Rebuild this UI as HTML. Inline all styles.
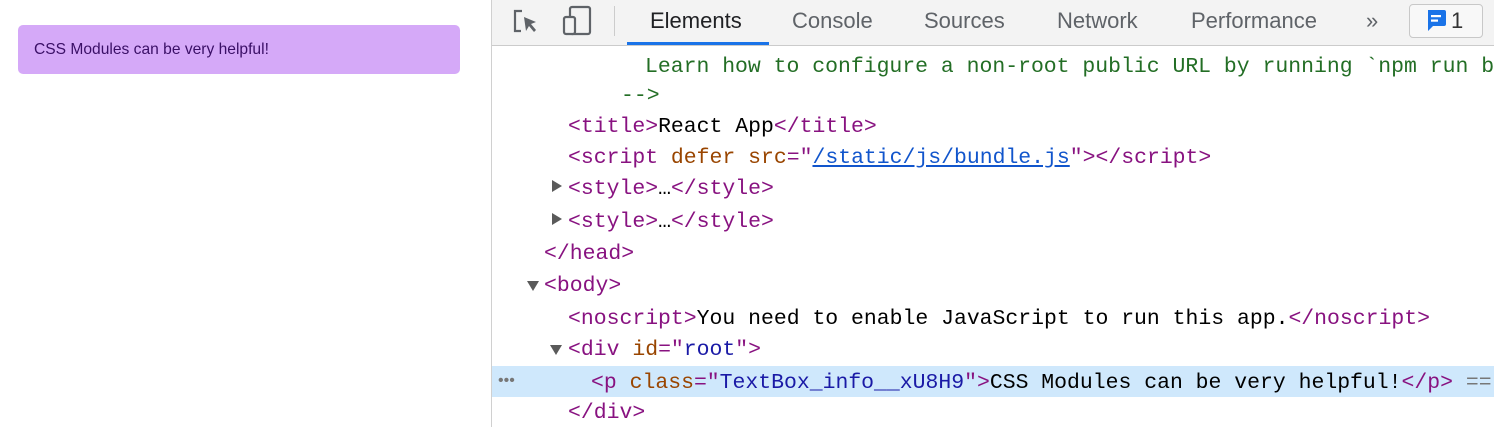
<!DOCTYPE html>
<html style="overflow:hidden"><head><style>
body{margin:0;width:1494px;height:427px;background:#fff;position:relative;overflow:hidden;font-family:"Liberation Sans",sans-serif}
.box{position:absolute;left:18px;top:25px;width:442px;height:49px;background:#d5a9f8;border-radius:5px;color:#3a0f66;font-size:15.6px;line-height:50px;padding-left:16px;box-sizing:border-box}
.dv{position:absolute;left:491px;top:0;width:1px;height:427px;background:#d0d0d0}
.tb{position:absolute;left:492px;top:0;width:1002px;height:45px;background:#f3f3f3;border-bottom:1px solid #cbcbcb}
.tab{position:absolute;top:8px;font-size:22px;color:#5f6368}
.ul{position:absolute;left:627px;top:42px;width:142px;height:3px;background:#1a73e8}
.ln{position:absolute;font-family:"Liberation Mono",monospace;font-size:21.45px;white-space:pre;line-height:30px;color:#000}
.t{color:#881280}.a{color:#994500}.v{color:#1a1aa6}.c{color:#236e25}.k{color:#1155cc;text-decoration:underline}
.tri{position:absolute;width:0;height:0}
.r{border-top:6px solid transparent;border-bottom:6px solid transparent;border-left:10px solid #5a5a5a}
.d{border-left:6px solid transparent;border-right:6px solid transparent;border-top:10px solid #5a5a5a}
.hl{position:absolute;left:492px;top:366px;width:1002px;height:31px;background:#cfe8fc}
</style></head><body>
<div class="box">CSS Modules can be very helpful!</div>
<div class="dv"></div>
<div class="tb">
<svg style="position:absolute;left:20px;top:8px" width="28" height="28" viewBox="0 0 28 28" fill="none" stroke="#5f6368" stroke-width="2.2"><path d="M10 3H3v20h6"/><path d="M12 9l12 5-5 2 5 6-2 2-5-6-3 5z" fill="#5f6368" stroke="none"/></svg>
<svg style="position:absolute;left:70px;top:5px" width="32" height="32" viewBox="0 0 32 32" fill="none" stroke="#5f6368" stroke-width="2.2"><rect x="8" y="2" width="20" height="27" rx="2"/><rect x="2" y="12" width="11" height="17" rx="2" fill="#f3f3f3"/></svg>
<div style="position:absolute;left:122px;top:6px;width:1px;height:30px;background:#ccc"></div>
<div style="position:absolute;left:917px;top:4px;width:72px;height:32px;border:1px solid #c8c8c8;border-radius:4px;background:#f8f8f8"></div>
<svg style="position:absolute;left:933px;top:9px" width="22" height="24" viewBox="0 0 22 24"><path d="M3 1h16a2 2 0 0 1 2 2v12a2 2 0 0 1-2 2H8l-5 5z" fill="#1a73e8"/><rect x="6" y="6" width="10" height="2.2" fill="#fff"/><rect x="6" y="10.5" width="7" height="2.2" fill="#fff"/></svg>
</div>
<div class="ul"></div>
<div class="tab" style="left:650px;color:#202124">Elements</div>
<div class="tab" style="left:792px">Console</div>
<div class="tab" style="left:924px">Sources</div>
<div class="tab" style="left:1057px">Network</div>
<div class="tab" style="left:1191px">Performance</div>
<div class="tab" style="left:1366px">»</div>
<div class="tab" style="left:1451px;color:#333">1</div>
<div class="hl"></div>
<div class="ln c" style="left:645px;top:52px">Learn how to configure a non-root public URL by running `npm run b</div>
<div class="ln c" style="left:621px;top:81px">--&gt;</div>
<div class="ln t" style="left:568px;top:112px">&lt;title&gt;<span style="color:#000">React App</span>&lt;/title&gt;</div>
<div class="ln t" style="left:568px;top:143px">&lt;script <span class="a">defer</span> <span class="a">src</span>="<span class="k">/static/js/bundle.js</span>"&gt;&lt;/script&gt;</div>
<div class="tri r" style="left:552px;top:180px"></div>
<div class="ln t" style="left:568px;top:174px">&lt;style&gt;<span style="color:#000">…</span>&lt;/style&gt;</div>
<div class="tri r" style="left:552px;top:213px"></div>
<div class="ln t" style="left:568px;top:207px">&lt;style&gt;<span style="color:#000">…</span>&lt;/style&gt;</div>
<div class="ln t" style="left:544px;top:239px">&lt;/head&gt;</div>
<div class="tri d" style="left:527px;top:281px"></div>
<div class="ln t" style="left:544px;top:271px">&lt;body&gt;</div>
<div class="ln t" style="left:568px;top:304px">&lt;noscript&gt;<span style="color:#000">You need to enable JavaScript to run this app.</span>&lt;/noscript&gt;</div>
<div class="tri d" style="left:550px;top:345px"></div>
<div class="ln t" style="left:568px;top:335px">&lt;div <span class="a">id</span>="<span class="v">root</span>"&gt;</div>
<div style="position:absolute;left:498px;top:372px;color:#777;font-size:16px">•••</div>
<div class="ln t" style="left:591px;top:368px">&lt;p <span class="a">class</span>="<span class="v">TextBox_info__xU8H9</span>"&gt;<span style="color:#000">CSS Modules can be very helpful!</span>&lt;/p&gt; <span style="color:#777">==</span></div>
<div class="ln t" style="left:568px;top:398px">&lt;/div&gt;</div>
</body></html>
